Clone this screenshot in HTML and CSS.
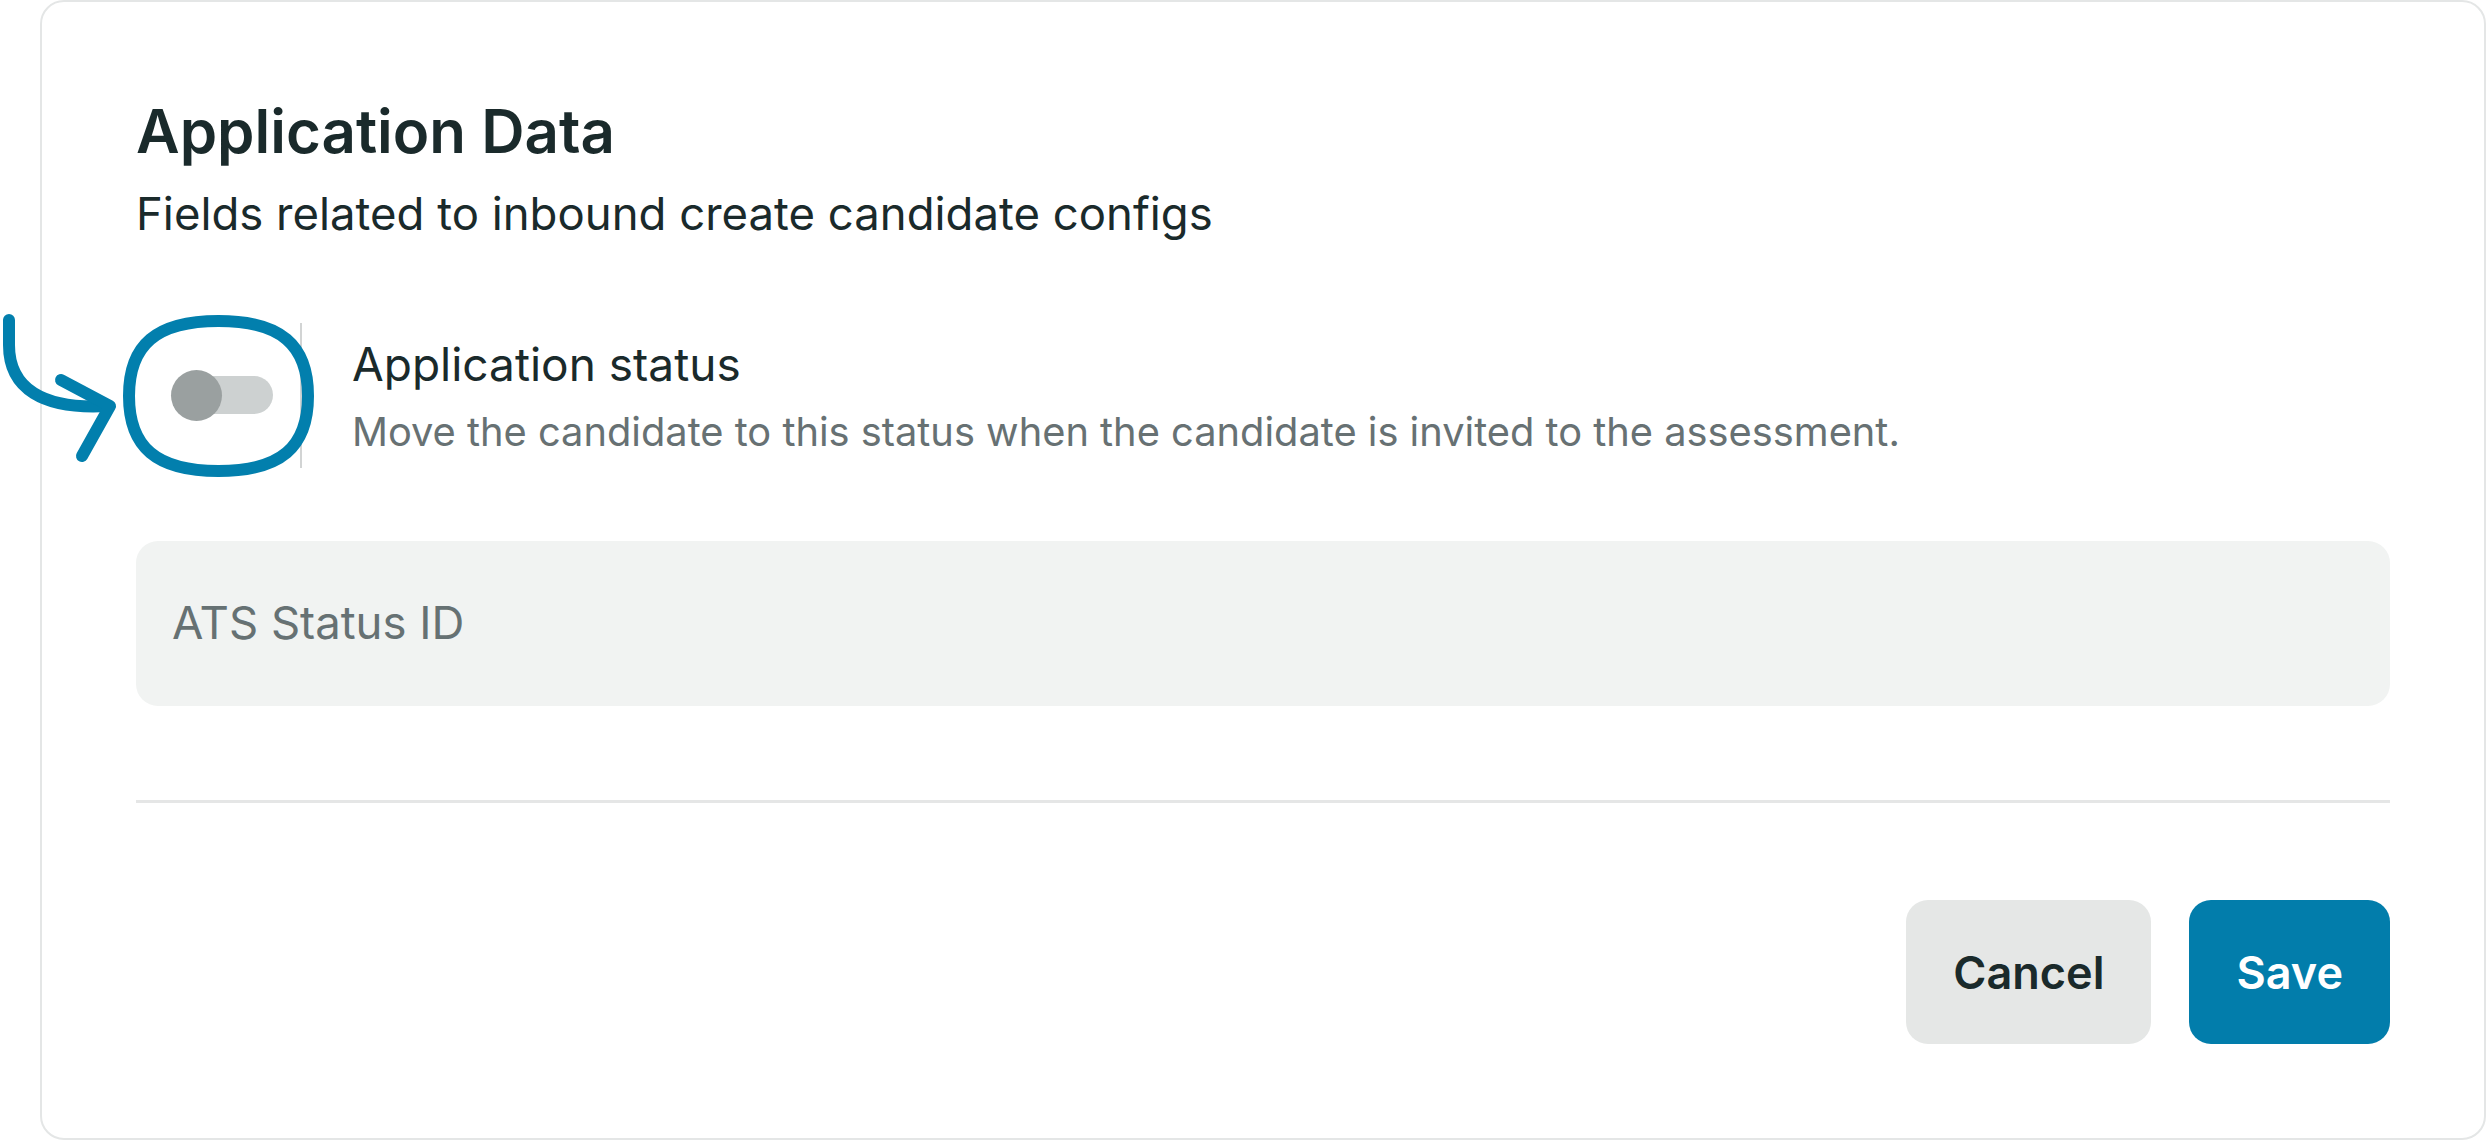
FILE: index.html
```html
<!DOCTYPE html>
<html lang="en">
<head>
<meta charset="utf-8">
<title>Application Data</title>
<link rel="stylesheet" href="styles.css">
</head>
<body>
<div class="card">
  <h1 class="title">Application Data</h1>
  <p class="subtitle">Fields related to inbound create candidate configs</p>

  <div class="toggle-row">
    <div class="toggle-wrap">
      <span class="switch">
        <span class="track"></span>
        <span class="thumb"></span>
      </span>
    </div>
    <span class="vdivider"></span>
    <div class="toggle-text">
      <div class="toggle-label">Application status</div>
      <div class="toggle-desc">Move the candidate to this status when the candidate is invited to the assessment.</div>
    </div>
    <svg class="annotation" width="330" height="180" viewBox="0 310 330 180" aria-hidden="true">
      <path d="M218.5 321 C281 321 308 345 308 396 C308 447 281 471 218.5 471 C156 471 129 447 129 396 C129 345 156 321 218.5 321 Z" fill="none" stroke="#027fad" stroke-width="12"/>
      <path d="M9 320 L9 345 C9 388 42 410 108 406" fill="none" stroke="#027fad" stroke-width="12" stroke-linecap="round"/>
      <path d="M61 380 L110 406 L82 456" fill="none" stroke="#027fad" stroke-width="12" stroke-linecap="round" stroke-linejoin="round"/>
    </svg>
  </div>

  <div class="field">
    <span class="placeholder">ATS Status ID</span>
  </div>

  <hr class="divider">

  <div class="actions">
    <button class="btn btn-cancel">Cancel</button>
    <button class="btn btn-save">Save</button>
  </div>
</div>
</body>
</html>
```

FILE: styles.css
```css
* { box-sizing: border-box; }

html, body {
  margin: 0;
  padding: 0;
  background: #ffffff;
}

body {
  font-family: Inter, "Noto Sans", "Liberation Sans", sans-serif;
  color: #1a2a2b;
  width: 2486px;
  height: 1140px;
  overflow: hidden;
}

.card {
  margin-left: 40px;
  width: 2446px;
  height: 1140px;
  border: 2px solid #e4e6e6;
  border-radius: 24px;
  background: #ffffff;
  padding: 93px 94px 94px 94px;
  display: flex;
  flex-direction: column;
}

.title {
  margin: 0;
  font-size: 60px;
  line-height: 72px;
  font-weight: 600;
  color: #1a2a2b;
}

.subtitle {
  margin: 19px 0 0 0;
  font-size: 45.5px;
  line-height: 56px;
  font-weight: 400;
  color: #1a2a2b;
}

.toggle-row {
  position: relative;
  margin-top: 80.5px;
  display: flex;
  align-items: center;
  height: 145px;
}

.toggle-wrap {
  width: 164px;
  padding-left: 35px;
  display: flex;
  align-items: center;
}

.switch {
  position: relative;
  display: block;
  width: 102px;
  height: 51px;
}

.track {
  position: absolute;
  left: 10px;
  top: 6.5px;
  width: 92px;
  height: 38px;
  border-radius: 19px;
  background: #cdd1d1;
}

.thumb {
  position: absolute;
  left: 0;
  top: 0;
  width: 51px;
  height: 51px;
  border-radius: 50%;
  background: #9aa0a0;
}

.vdivider {
  width: 2px;
  height: 145px;
  background: #d2d4d4;
  margin-right: 50px;
}

.toggle-text {
  display: flex;
  flex-direction: column;
  gap: 16px;
  padding-top: 2px;
}

.toggle-label {
  font-size: 46px;
  line-height: 56px;
  color: #1a2a2b;
}

.toggle-desc {
  font-size: 39.8px;
  line-height: 48px;
  color: #677173;
}

.annotation {
  position: absolute;
  left: -136px;
  top: -13px;
  overflow: visible;
}

.field {
  margin-top: 73px;
  height: 166px;
  border-radius: 22px;
  background: #f1f3f2;
  padding: 0 36px;
  display: flex;
  align-items: center;
}

.placeholder {
  font-size: 45.5px;
  line-height: 56px;
  color: #667173;
}

.divider {
  margin: 94px 0 0 0;
  border: 0;
  height: 3px;
  background: #e5e6e6;
}

.actions {
  margin-top: 97px;
  display: flex;
  justify-content: flex-end;
  gap: 38px;
}

.btn {
  height: 144px;
  padding: 0 47px;
  border: 0;
  border-radius: 22px;
  font-family: Inter, "Noto Sans", "Liberation Sans", sans-serif;
  font-size: 45px;
  font-weight: 600;
  cursor: pointer;
}

.btn-cancel {
  background: #e5e7e6;
  color: #1a2a2b;
}

.btn-save {
  background: #027dab;
  color: #ffffff;
}
```
